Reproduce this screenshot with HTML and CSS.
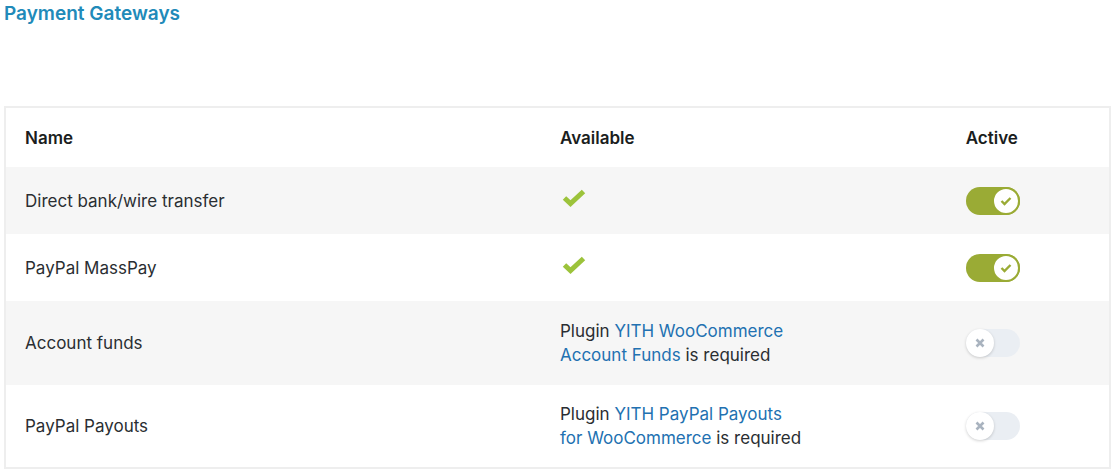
FILE: index.html
```html
<!DOCTYPE html>
<html>
<head>
<meta charset="utf-8">
<link rel="stylesheet" href="styles.css">
</head>
<body>
<h2 class="title">Payment Gateways</h2>
<table class="gateways">
  <colgroup>
    <col class="c-name">
    <col class="c-avail">
    <col class="c-active">
  </colgroup>
  <thead>
    <tr class="head">
      <th>Name</th>
      <th>Available</th>
      <th>Active</th>
    </tr>
  </thead>
  <tbody>
    <tr class="row alt">
      <td>Direct bank/wire transfer</td>
      <td><svg class="check" width="24" height="18" viewBox="0 0 24 18"><polyline points="2.5,9 8.5,14.5 21.5,2.5" fill="none" stroke="#9cc33b" stroke-width="5"/></svg></td>
      <td><span class="toggle on"><span class="knob"><svg width="12" height="10" viewBox="0 0 12 10"><polyline points="1.5,5 4.5,8 10.5,2" fill="none" stroke="#9aab35" stroke-width="2.4"/></svg></span></span></td>
    </tr>
    <tr class="row">
      <td>PayPal MassPay</td>
      <td><svg class="check" width="24" height="18" viewBox="0 0 24 18"><polyline points="2.5,9 8.5,14.5 21.5,2.5" fill="none" stroke="#9cc33b" stroke-width="5"/></svg></td>
      <td><span class="toggle on"><span class="knob"><svg width="12" height="10" viewBox="0 0 12 10"><polyline points="1.5,5 4.5,8 10.5,2" fill="none" stroke="#9aab35" stroke-width="2.4"/></svg></span></span></td>
    </tr>
    <tr class="row tall alt">
      <td>Account funds</td>
      <td><span class="req">Plugin <a href="#">YITH WooCommerce Account Funds</a> is required</span></td>
      <td><span class="toggle off"><span class="knob"><svg width="10" height="10" viewBox="0 0 10 10"><path d="M1.5 1.5L8.5 8.5M8.5 1.5L1.5 8.5" stroke="#a9b3bf" stroke-width="2.6"/></svg></span></span></td>
    </tr>
    <tr class="row tall2">
      <td>PayPal Payouts</td>
      <td><span class="req">Plugin <a href="#">YITH PayPal Payouts for WooCommerce</a> is required</span></td>
      <td><span class="toggle off"><span class="knob"><svg width="10" height="10" viewBox="0 0 10 10"><path d="M1.5 1.5L8.5 8.5M8.5 1.5L1.5 8.5" stroke="#a9b3bf" stroke-width="2.6"/></svg></span></span></td>
    </tr>
  </tbody>
</table>
</body>
</html>
```
FILE: styles.css
```css
html, body {
  margin: 0;
  padding: 0;
  background: #fff;
}
body {
  padding: 4px;
  font-family: Inter, "Noto Sans", sans-serif;
  color: #1f2326;
}
.title {
  margin: 0 0 82px 0;
  font-size: 19px;
  line-height: 20px;
  font-weight: 600;
  color: #218ab9;
}
.gateways {
  width: 1107px;
  border-collapse: collapse;
  table-layout: fixed;
  border: 2px solid #eeeeee;
  font-size: 17px;
  line-height: 24px;
}
.c-name { width: 535px; }
.c-avail { width: 405px; }
.c-active { width: 163px; }
.gateways th,
.gateways td {
  padding: 0 20px 0 19px;
  text-align: left;
  vertical-align: middle;
}
.gateways th {
  font-weight: 600;
  color: #1a1d20;
}
.head { height: 60px; }
.row { height: 67px; }
.row.tall { height: 84px; }
.row.tall2 { height: 83px; }
.alt { background: #f6f6f6; }
.gateways td { color: #2a2e32; }
.check {
  display: block;
  margin: -5px 0 0 2px;
}
.req {
  display: block;
  max-width: 244px;
}
.req a {
  color: #2271b1;
  text-decoration: none;
}
.toggle {
  display: flex;
  align-items: center;
  width: 54px;
  height: 28px;
  border-radius: 14px;
  box-sizing: border-box;
}
.toggle.on {
  background: #9aab35;
  justify-content: flex-end;
}
.toggle.off {
  background: #eaeef3;
  justify-content: flex-start;
}
.knob {
  display: flex;
  align-items: center;
  justify-content: center;
  width: 28px;
  height: 28px;
  border-radius: 50%;
  background: #fff;
  box-sizing: border-box;
}
.toggle.on .knob {
  border: 2px solid #9aab35;
}
.toggle.off .knob {
  box-shadow: 0 1px 3px rgba(0, 0, 0, 0.18);
}
```
